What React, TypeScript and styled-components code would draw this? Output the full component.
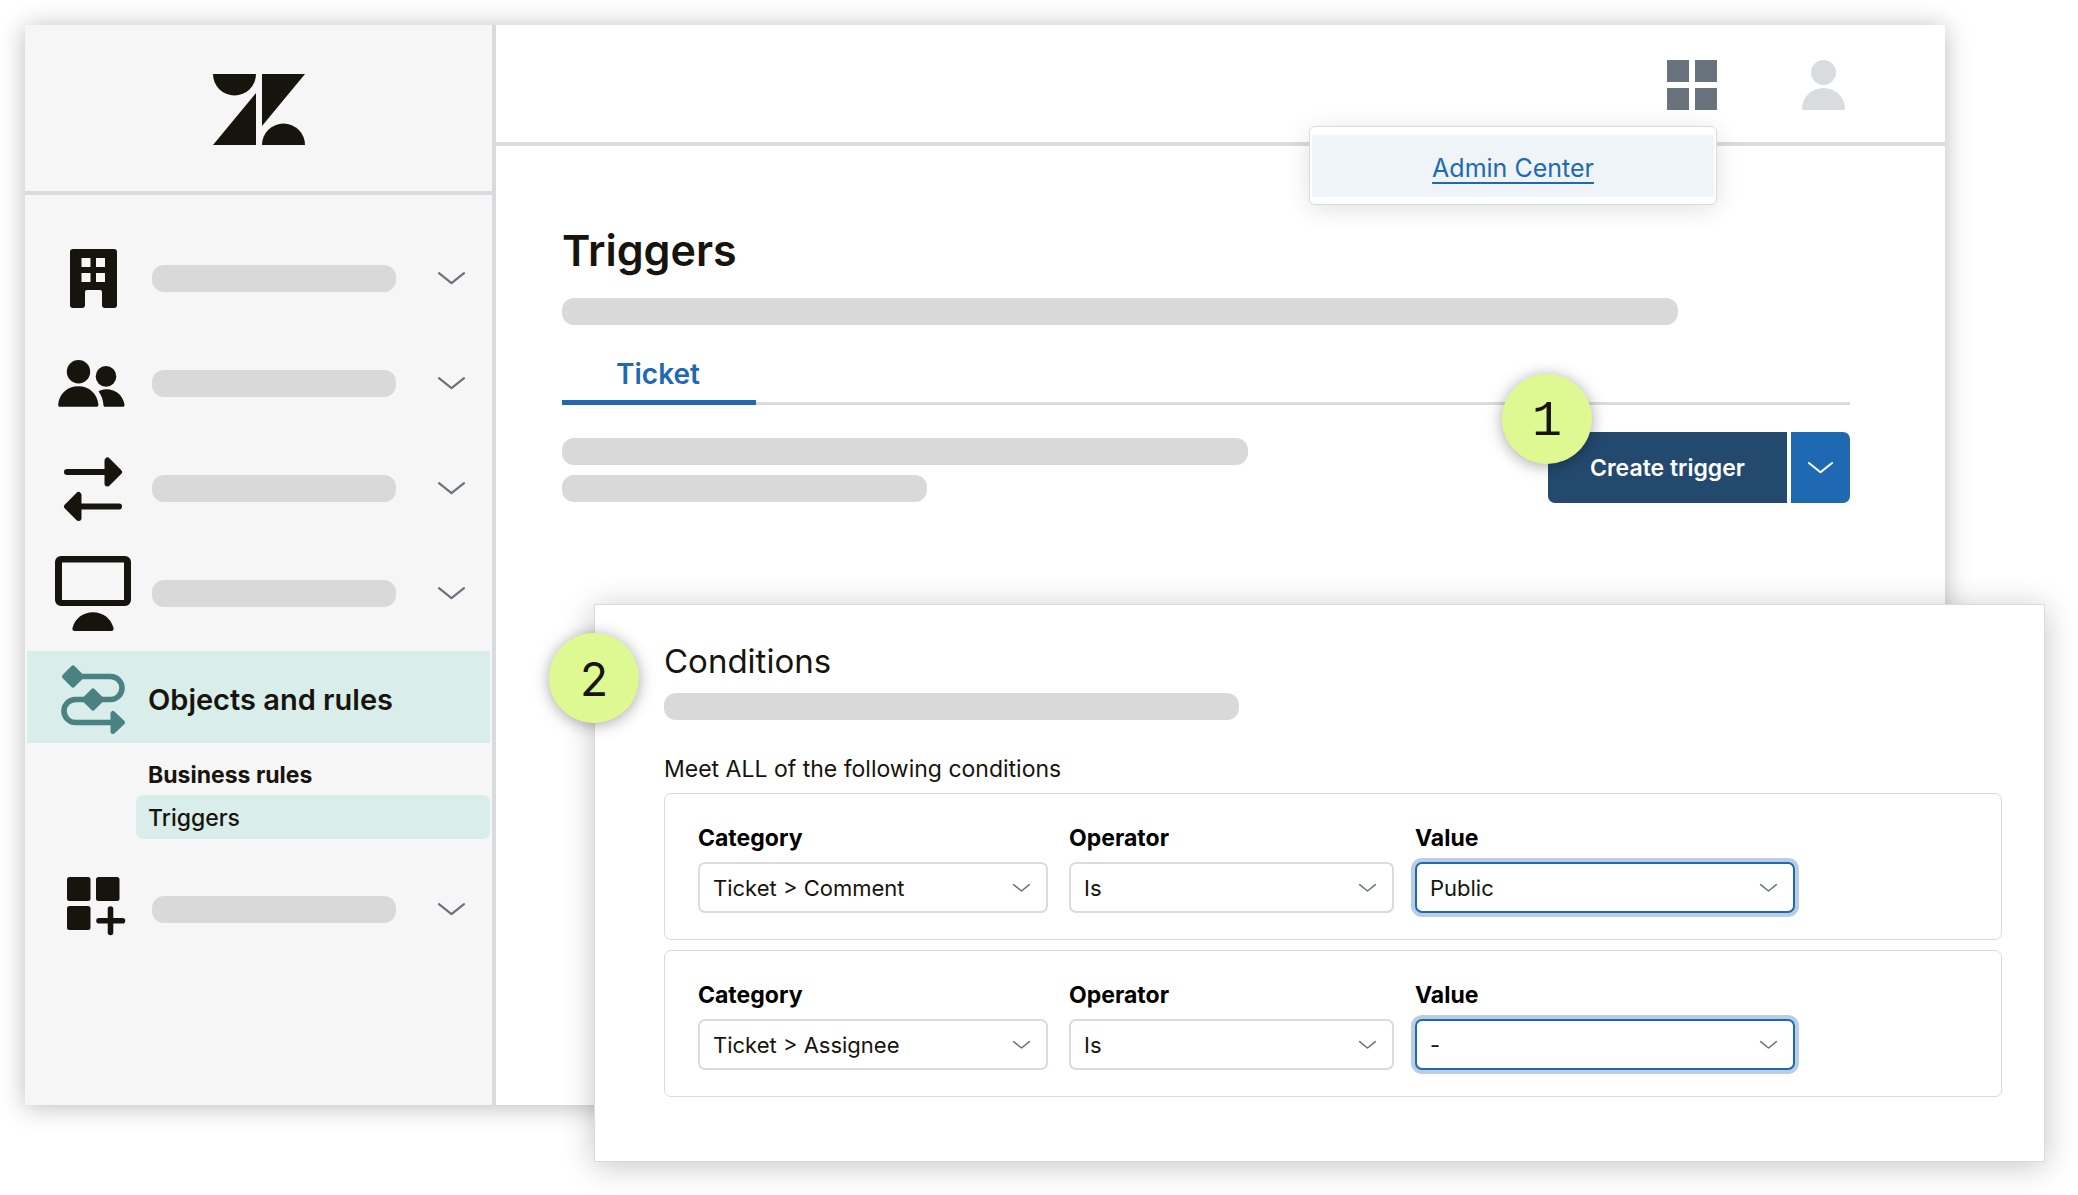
import React from "react";
import styled, { createGlobalStyle, css } from "styled-components";

const color = {
  ink: "#17140d",
  blue: "#1f69b2",
  navy: "#24496f",
  line: "#d8dcde",
  bar: "#d9d9d9",
  mint: "#d9edeb",
  teal: "#4a8283",
  slate: "#68737d",
  lime: "#def991",
};

const GlobalStyle = createGlobalStyle`
  *, *::before, *::after { box-sizing: border-box; }
  body {
    margin: 0;
    background: #fff;
    color: ${color.ink};
    font-family: Inter, "Liberation Sans", sans-serif;
    font-size: 23px;
  }
  button, select { font: inherit; color: inherit; }
  h1, h2, p { margin: 0; }
  svg { display: block; flex: none; overflow: visible; }
`;

/* The app window and the panel share one grid cell so that they overlap. */
const Stage = styled.div`
  display: grid;
  grid-template-columns: minmax(0, 1fr);
  padding: 25px 33px 33px 25px;
`;

const AppWindow = styled.div`
  grid-area: 1 / 1;
  display: flex;
  margin: 0 100px 57px 0;
  background: #fff;
  box-shadow: 0 2px 24px rgba(0, 0, 0, 0.27);
`;

const Sidebar = styled.aside`
  flex: 0 0 471px;
  background: #f6f6f6;
  border-right: 4px solid ${color.line};
`;

const Brand = styled.div`
  display: flex;
  justify-content: center;
  padding: 49px 0 46px;
  border-bottom: 4px solid ${color.line};
`;

const Nav = styled.nav`
  display: flex;
  flex-direction: column;
  padding: 31px 2px 0;
`;

const NavRow = styled.button<{ $active?: boolean }>`
  display: flex;
  align-items: center;
  gap: 19px;
  width: 100%;
  height: 105px;
  padding: 0 25px 0 26px;
  border: 0;
  background: none;
  text-align: left;
  cursor: pointer;
  ${(p) =>
    p.$active &&
    css`
      gap: 15px;
      height: 92px;
      margin-top: 5px;
      padding-top: 4px;
      background: ${color.mint};
      font-size: 29px;
      font-weight: 600;
    `}
`;

const IconSlot = styled.span`
  display: flex;
  flex: 0 0 80px;
  justify-content: center;
`;

const Bar = styled.span<{ $width: number }>`
  display: block;
  width: ${(p) => p.$width}px;
  max-width: 100%;
  height: 27px;
  border-radius: 12px;
  background: ${color.bar};
`;

const Push = styled.span`
  margin-left: auto;
`;

const SubNav = styled.div`
  display: flex;
  flex-direction: column;
  padding: 12px 0 18px 109px;
`;

const SubTitle = styled.span`
  padding-left: 12px;
  line-height: 40px;
  font-weight: 700;
`;

const SubLink = styled.a`
  padding: 2px 0 0 12px;
  border-radius: 7px;
  background: ${color.mint};
  color: inherit;
  font-weight: 500;
  line-height: 42px;
  text-decoration: none;
`;

const Workspace = styled.div`
  flex: 1;
  min-width: 0;
`;

const TopBar = styled.header`
  position: relative;
  display: flex;
  justify-content: flex-end;
  gap: 85px;
  padding: 35px 100px 32px;
  border-bottom: 4px solid ${color.line};
`;

const IconButton = styled.button`
  display: block;
  padding: 0;
  border: 0;
  background: none;
  cursor: pointer;
`;

const MenuAnchor = styled.div`
  position: relative;
`;

const Menu = styled.div`
  position: absolute;
  top: 66px;
  right: 0;
  z-index: 1;
  width: 408px;
  padding: 8px 2px 7px;
  border: 1px solid ${color.line};
  border-radius: 6px;
  background: #fff;
  box-shadow: 0 4px 24px rgba(0, 0, 0, 0.12);
`;

const MenuItem = styled.div`
  padding: 18px 0 14px;
  background: #eef4f8;
  font-size: 25px;
  line-height: 30px;
  text-align: center;
`;

const MenuLink = styled.a`
  color: ${color.blue};
  text-decoration: underline;
  text-decoration-thickness: 2px;
  text-underline-offset: 5px;
`;

const Main = styled.main`
  padding: 76px 95px 0 66px;
`;

const Title = styled.h1`
  margin-bottom: 20px;
  font-size: 43px;
  font-weight: 600;
  line-height: 56px;
`;

const TabList = styled.div`
  display: flex;
  margin-top: 22px;
  box-shadow: inset 0 -3px ${color.line};
`;

const Tab = styled.button`
  width: 194px;
  height: 58px;
  padding: 0 2px 0 0;
  border: 0;
  border-bottom: 5px solid ${color.blue};
  background: none;
  color: ${color.blue};
  font-size: 28px;
  font-weight: 600;
  cursor: pointer;
`;

const Actions = styled.div`
  display: flex;
  justify-content: space-between;
  margin-top: 27px;
`;

const Description = styled.div`
  display: flex;
  flex-direction: column;
  gap: 10px;
  padding-top: 6px;
`;

const SplitButton = styled.div`
  position: relative;
  display: flex;
  gap: 4px;
  height: 71px;
`;

const CreateButton = styled.button`
  width: 239px;
  padding: 0;
  border: 0;
  border-radius: 7px 0 0 7px;
  background: ${color.navy};
  color: #fff;
  font-weight: 600;
  cursor: pointer;
`;

const MoreButton = styled.button`
  display: flex;
  align-items: center;
  justify-content: center;
  width: 59px;
  padding: 0;
  border: 0;
  border-radius: 0 7px 7px 0;
  background: ${color.blue};
  cursor: pointer;
`;

const StepBadge = styled.span<{ $top: number; $mono?: boolean }>`
  position: absolute;
  top: ${(p) => p.$top}px;
  left: -46px;
  width: 90px;
  height: 90px;
  border-radius: 50%;
  background: ${color.lime};
  box-shadow: 0 2px 16px rgba(0, 0, 0, 0.35);
  font-family: ${(p) => (p.$mono ? '"Liberation Mono", monospace' : "Inter, sans-serif")};
  font-size: ${(p) => (p.$mono ? 50 : 46)}px;
  line-height: ${(p) => (p.$mono ? 96 : 92)}px;
  text-align: center;
`;

const Panel = styled.section`
  grid-area: 1 / 1;
  position: relative;
  margin: 579px 0 0 569px;
  padding: 36px 42px 64px 69px;
  border: 1px solid ${color.line};
  background: #fff;
  box-shadow: 0 4px 30px rgba(0, 0, 0, 0.23);
`;

const PanelTitle = styled.h2`
  margin-bottom: 12px;
  font-size: 33px;
  font-weight: 400;
  line-height: 40px;
`;

const Lead = styled.p`
  margin: 34px 0 9px;
  font-weight: 400;
  line-height: 30px;
`;

const ConditionList = styled.div`
  display: flex;
  flex-direction: column;
  gap: 10px;
`;

const Condition = styled.div`
  display: grid;
  grid-template-columns: minmax(0, 350px) minmax(0, 325px) minmax(0, 380px);
  gap: 21px;
  padding: 29px 33px 26px;
  border: 1px solid ${color.line};
  border-radius: 7px;
`;

const Field = styled.div`
  display: flex;
  flex-direction: column;
  gap: 9px;
`;

const FieldLabel = styled.label`
  color: #000;
  font-weight: 700;
  line-height: 30px;
`;

const SelectBox = styled.div`
  position: relative;
`;

const Select = styled.select<{ $focused?: boolean }>`
  display: block;
  width: 100%;
  height: 51px;
  padding: 0 44px 0 13px;
  border: 2px solid ${(p) => (p.$focused ? color.blue : color.line)};
  border-radius: 7px;
  background: #fff;
  box-shadow: ${(p) => (p.$focused ? "0 0 0 4px #b9cde4" : "none")};
  font-size: 22px;
  appearance: none;
  outline: none;
`;

const SelectArrow = styled.span`
  position: absolute;
  top: 22px;
  right: 18px;
  pointer-events: none;
`;

function Chevron({ width = 27, stroke = color.slate, weight = 2.2 }) {
  return (
    <svg width={width} height={width * 0.45} viewBox="0 0 27 12" fill="none">
      <path
        d="M1 1 13.5 11 26 1"
        stroke={stroke}
        strokeWidth={weight}
        strokeLinecap="round"
        strokeLinejoin="round"
      />
    </svg>
  );
}

function Logo() {
  return (
    <svg width="92" height="71" viewBox="0 0 92 71" fill={color.ink}>
      <path d="M0 0h43a21.5 21.5 0 0 1-43 0z" />
      <path d="M43 19v52H0z" />
      <path d="M49 0h43L49 52z" />
      <path d="M49 71a21.5 21.5 0 0 1 43 0z" />
    </svg>
  );
}

function BuildingIcon() {
  return (
    <svg width="47" height="59" viewBox="0 0 47 59" fill={color.ink}>
      <path
        fillRule="evenodd"
        d="M3 0h41a3 3 0 0 1 3 3v53a3 3 0 0 1-3 3H35a3 3 0 0 1-3-3V43a2 2 0 0 0-2-2H17a2 2 0 0 0-2 2v13a3 3 0 0 1-3 3H3a3 3 0 0 1-3-3V3a3 3 0 0 1 3-3zM11.500 9v9h9V9zM26 9v9h9V9zM11.500 24v9h9v-9zM26 24v9h9v-9z"
      />
    </svg>
  );
}

function PeopleIcon() {
  return (
    <svg width="70" height="47" viewBox="0 0 70 47" fill={color.ink}>
      <circle cx="20.500" cy="11.700" r="11.700" />
      <circle cx="48" cy="16.400" r="10.300" />
      <path d="M2.500 46.800C.8 46.800 0 45.800.2 44.200 1.500 33.500 9.500 26.300 20.300 26.300S39 33.500 40.400 44.200c.2 1.600-.6 2.600-2.300 2.600z" />
      <path d="M40.500 31.200c2.300-1.300 4.900-2 7.800-2 9.800 0 16.700 6.500 18.200 15.200.3 1.500-.5 2.400-2 2.400H47.200c-1 0-1.600-.6-1.700-1.600-.4-5.500-2-9.800-5-14z" />
    </svg>
  );
}

function ArrowsIcon() {
  return (
    <svg width="58" height="64" viewBox="0 0 58 64" fill={color.ink} stroke={color.ink} strokeLinejoin="round" strokeLinecap="round">
      <path d="M3 15h40M15 49.500h40" strokeWidth="6" />
      <path d="M43.500 3.500v23L55 15z" strokeWidth="6" />
      <path d="M14.500 38v23L3 49.500z" strokeWidth="6" />
    </svg>
  );
}

function MonitorIcon() {
  return (
    <svg width="76" height="75" viewBox="0 0 76 75" fill={color.ink}>
      <path fillRule="evenodd" d="M6 0h64a6 6 0 0 1 6 6v38a6 6 0 0 1-6 6H6a6 6 0 0 1-6-6V6a6 6 0 0 1 6-6zM7 6.500v37.500h62V6.500z" />
      <path d="M20 75c-2 0-3-1.200-2.500-3C19.800 62.500 28 56.200 38 56.200S56.200 62.500 58.500 72c.5 1.800-.5 3-2.500 3z" />
    </svg>
  );
}

function FlowIcon() {
  return (
    <svg width="64" height="66" viewBox="0 1 64 66" fill={color.teal} stroke={color.teal} strokeLinejoin="round">
      <path d="M12 11.500h37.500a11.500 11.500 0 0 1 0 23h-35a11.500 11.500 0 0 0 0 23H52" fill="none" strokeWidth="5.600" />
      <path d="M12 3 3.500 11.500 12 20l8.500-8.500z" strokeWidth="5" />
      <path d="M32 26l-8.500 8.500L32 43l8.500-8.500z" strokeWidth="5" />
      <path d="M52 48.500v18l9.500-9z" strokeWidth="5" />
    </svg>
  );
}

function AppsIcon() {
  return (
    <svg width="64" height="65" viewBox="-6 0 64 65" fill={color.ink}>
      <rect width="23.500" height="24" rx="2.500" />
      <rect x="29" width="23.500" height="24" rx="2.500" />
      <rect y="29" width="23.500" height="24" rx="2.500" />
      <path d="M43.500 32v23.500M32 43.700h23.500" stroke={color.ink} strokeWidth="5.600" strokeLinecap="round" />
    </svg>
  );
}

function ProductsIcon() {
  return (
    <svg width="50" height="50" viewBox="0 0 50 50" fill={color.slate}>
      <path d="M0 0h22v22H0zM28 0h22v22H28zM0 28h22v22H0zM28 28h22v22H28z" />
    </svg>
  );
}

function UserIcon() {
  return (
    <svg width="43" height="50" viewBox="0 0 43 50" fill={color.line}>
      <circle cx="21.500" cy="12.500" r="12.500" />
      <path d="M2.500 50C.8 50 0 49 0 47.400 1 36.500 10 28 21.500 28S42 36.500 43 47.400C43 49 42.200 50 40.500 50z" />
    </svg>
  );
}

function CollapsedRow({ label, children }: { label: string; children: React.ReactNode }) {
  return (
    <NavRow type="button" aria-label={label} aria-expanded={false}>
      <IconSlot>{children}</IconSlot>
      <Bar $width={244} />
      <Push>
        <Chevron />
      </Push>
    </NavRow>
  );
}

type SelectFieldProps = { id: string; label: string; value: string; focused?: boolean };

function SelectField({ id, label, value, focused }: SelectFieldProps) {
  return (
    <Field>
      <FieldLabel htmlFor={id}>{label}</FieldLabel>
      <SelectBox>
        <Select id={id} defaultValue={value} $focused={focused}>
          <option>{value}</option>
        </Select>
        <SelectArrow>
          <Chevron width={17} weight={2.4} />
        </SelectArrow>
      </SelectBox>
    </Field>
  );
}

const conditions = [
  { category: "Ticket > Comment", operator: "Is", value: "Public" },
  { category: "Ticket > Assignee", operator: "Is", value: "-" },
];

export default function App() {
  return (
    <>
      <GlobalStyle />
      <Stage>
        <AppWindow>
          <Sidebar>
            <Brand>
              <Logo />
            </Brand>
            <Nav>
              <CollapsedRow label="Account">
                <BuildingIcon />
              </CollapsedRow>
              <CollapsedRow label="People">
                <PeopleIcon />
              </CollapsedRow>
              <CollapsedRow label="Channels">
                <ArrowsIcon />
              </CollapsedRow>
              <CollapsedRow label="Workspaces">
                <MonitorIcon />
              </CollapsedRow>
              <NavRow type="button" $active aria-expanded>
                <IconSlot>
                  <FlowIcon />
                </IconSlot>
                Objects and rules
              </NavRow>
              <SubNav>
                <SubTitle>Business rules</SubTitle>
                <SubLink href="#triggers" aria-current="page">
                  Triggers
                </SubLink>
              </SubNav>
              <CollapsedRow label="Apps and integrations">
                <AppsIcon />
              </CollapsedRow>
            </Nav>
          </Sidebar>
          <Workspace>
            <TopBar>
              <MenuAnchor>
                <IconButton type="button" aria-label="Products">
                  <ProductsIcon />
                </IconButton>
                <Menu>
                  <MenuItem>
                    <MenuLink href="#admin">Admin Center</MenuLink>
                  </MenuItem>
                </Menu>
              </MenuAnchor>
              <IconButton type="button" aria-label="Profile">
                <UserIcon />
              </IconButton>
            </TopBar>
            <Main>
              <Title>Triggers</Title>
              <Bar $width={1116} />
              <TabList role="tablist">
                <Tab type="button" role="tab" aria-selected>
                  Ticket
                </Tab>
              </TabList>
              <Actions>
                <Description>
                  <Bar $width={686} />
                  <Bar $width={365} />
                </Description>
                <SplitButton>
                  <CreateButton type="button">Create trigger</CreateButton>
                  <MoreButton type="button" aria-label="More options">
                    <Chevron width={25} stroke="#fff" />
                  </MoreButton>
                  <StepBadge $top={-58} $mono>
                    1
                  </StepBadge>
                </SplitButton>
              </Actions>
            </Main>
          </Workspace>
        </AppWindow>
        <Panel>
          <StepBadge $top={28}>2</StepBadge>
          <PanelTitle>Conditions</PanelTitle>
          <Bar $width={575} />
          <Lead>Meet ALL of the following conditions</Lead>
          <ConditionList>
            {conditions.map((c, i) => (
              <Condition key={c.category}>
                <SelectField id={`category-${i}`} label="Category" value={c.category} />
                <SelectField id={`operator-${i}`} label="Operator" value={c.operator} />
                <SelectField id={`value-${i}`} label="Value" value={c.value} focused />
              </Condition>
            ))}
          </ConditionList>
        </Panel>
      </Stage>
    </>
  );
}
